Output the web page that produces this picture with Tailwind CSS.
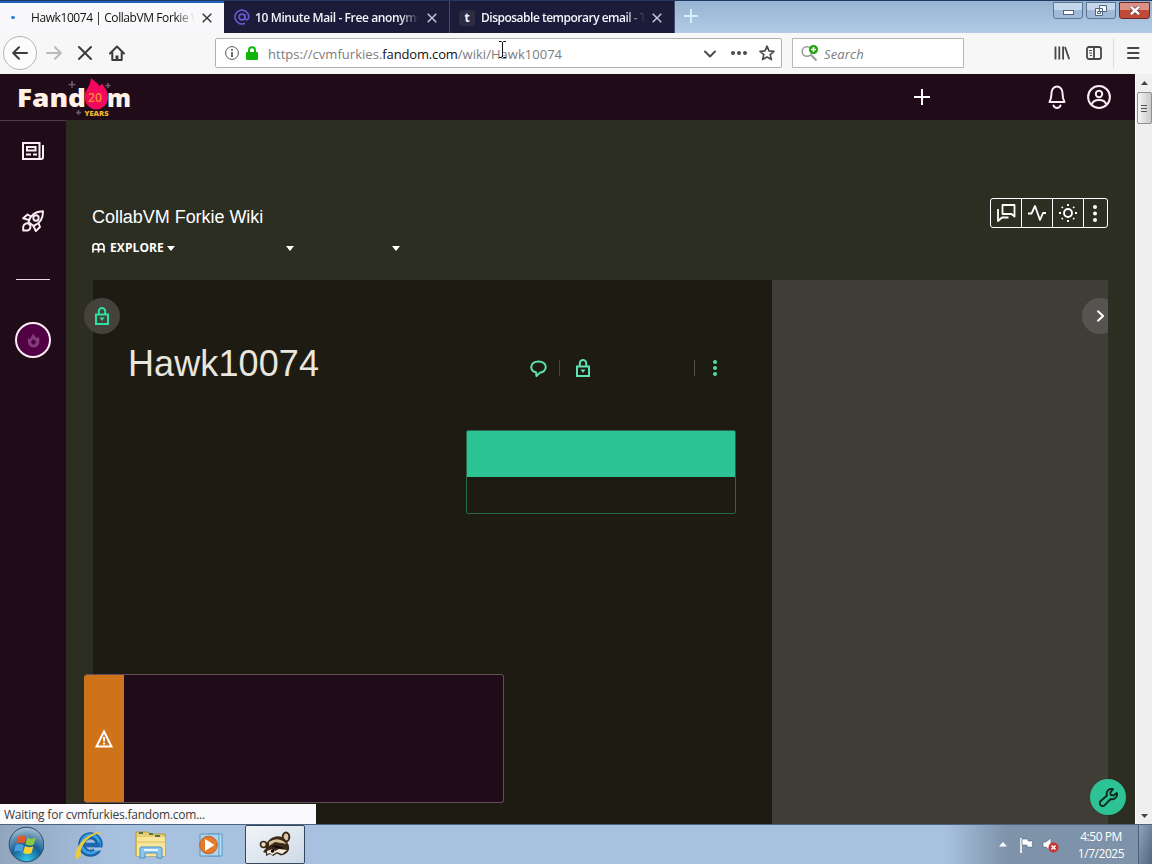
<!DOCTYPE html>
<html lang="en">
<head>
<meta charset="UTF-8">
<meta name="viewport" content="width=device-width, initial-scale=1.0">
<title>Hawk10074 | CollabVM Forkie Wiki</title>
<script src="https://cdn.jsdelivr.net/npm/@tailwindcss/browser@4"></script>
</head>
<body class="w-[1152px] h-[864px] overflow-hidden relative flex flex-col bg-[#2d2e22] font-['Open_Sans','Noto_Sans',sans-serif]">

<!-- tab strip -->
<div class="h-[33px] shrink-0 flex text-[12px] bg-linear-to-b from-[#96b3d1] to-[#b2cce6] border-t border-[#203a61]">
<div class="w-[224px] h-8 bg-[#f9f9fb] border-t-2 border-[#1d62b5] flex items-center pb-px">
<span class="ml-[11px] w-1 h-[3px] rounded-full bg-[#2d86d8]"></span>
<div class="ml-4 w-[164px] overflow-hidden whitespace-nowrap text-[#111] tracking-[-0.42px] mask-r-from-88% mask-r-to-100%">Hawk10074 | CollabVM Forkie Wiki</div>
<svg class="ml-[7px] w-[10px] h-[10px]" viewBox="0 0 10 10" stroke="#333" stroke-width="1.4"><path d="M.7.7l8.6 8.6M9.3.7L.7 9.3"/></svg>
</div>
<div class="w-[226px] h-8 bg-[#1d1b3a] border-r border-[#4a4a6c] flex items-center text-[#f4f4fa] font-semibold">
<svg class="ml-[10px] w-4 h-4" viewBox="0 0 16 16" fill="none" stroke="#6b58d0" stroke-width="1.6"><circle cx="8" cy="8" r="2.9"/><path d="M10.900 5v4.200c0 2.200 3.900 2 3.900-1.400A6.900 6.900 0 1 0 11 14.200"/></svg>
<div class="ml-[5px] mt-[2px] w-[164px] overflow-hidden whitespace-nowrap tracking-[-0.38px] mask-r-from-88% mask-r-to-100%">10 Minute Mail - Free anonymous email</div>
<svg class="ml-[8px] mt-[2px] w-[10px] h-[10px]" viewBox="0 0 10 10" stroke="#c8c8dc" stroke-width="1.4"><path d="M.7.7l8.6 8.6M9.3.7L.7 9.3"/></svg>
</div>
<div class="w-[225px] h-8 bg-[#1d1b3a] border-r border-[#4a4a6c] flex items-center text-[#f4f4fa] font-semibold">
<span class="ml-[9px] mt-[2px] w-4 h-4 rounded-sm bg-[#2d2c42] flex items-center justify-center text-[12px] font-bold leading-none pb-px">t</span>
<div class="ml-[6px] mt-[2px] w-[164px] overflow-hidden whitespace-nowrap tracking-[-0.5px] mask-r-from-88% mask-r-to-100%">Disposable temporary email - Tempail</div>
<svg class="ml-[7px] mt-[2px] w-[10px] h-[10px]" viewBox="0 0 10 10" stroke="#c8c8dc" stroke-width="1.4"><path d="M.7.7l8.6 8.6M9.3.7L.7 9.3"/></svg>
</div>
<svg class="ml-[9px] mt-2 w-[14px] h-[14px]" viewBox="0 0 14 14" stroke="#d4f1fa" stroke-width="1.8"><path d="M7 0v14M0 7h14"/></svg>
<div class="ml-auto mr-[2px] mt-px flex gap-[3px]">
<div class="w-[30px] h-[17px] rounded-b-[3px] border border-[#5d7391] bg-linear-to-b from-[#c5d8ec] from-50% to-[#9fbbd9] to-50% flex items-center justify-center"><span class="w-[11px] h-[5px] mt-1 border border-[#51657f] bg-white"></span></div>
<div class="w-[30px] h-[17px] rounded-b-[3px] border border-[#5d7391] bg-linear-to-b from-[#c5d8ec] from-50% to-[#9fbbd9] to-50% flex items-center justify-center"><svg class="w-3 h-[11px]" viewBox="0 0 12 11" fill="#f4f8fc" stroke="#51657f"><path d="M4.500.5h7v6h-7zM.5 3.500h7v7h-7z"/><path d="M2.500 6.500h3v2h-3z"/></svg></div>
<div class="w-[31px] h-[17px] rounded-b-[3px] border border-[#6d2a28] bg-linear-to-b from-[#dd9184] from-50% to-[#c04a38] to-50% flex items-center justify-center"><svg class="w-[12px] h-[9px]" viewBox="0 0 12 9"><path d="M2 .8l8 7.400M10 .8L2 8.200" stroke="#6b4747" stroke-width="3.800"/><path d="M2 .8l8 7.400M10 .8L2 8.200" stroke="#fff" stroke-width="2.400"/></svg></div>
</div>
</div>

<!-- toolbar -->
<div class="h-[41px] shrink-0 flex items-center bg-[#f7f7f8] pb-px">
<div class="ml-[3px] w-[34px] h-[34px] rounded-full border border-[#b5b5b7] bg-[#fcfcfd] flex items-center justify-center">
<svg class="w-4 h-4" viewBox="0 0 16 16" fill="none" stroke="#3c3c3e" stroke-width="2" stroke-linecap="round" stroke-linejoin="round"><path d="M15 8H1.500M7 2.200L1.200 8 7 13.800"/></svg>
</div>
<svg class="ml-[9px] w-4 h-4" viewBox="0 0 16 16" fill="none" stroke="#bababc" stroke-width="2" stroke-linecap="round" stroke-linejoin="round"><path d="M1 8h13.500M9 2.200L14.800 8 9 13.800"/></svg>
<svg class="ml-[15px] w-4 h-4" viewBox="0 0 16 16" fill="none" stroke="#3c3c3e" stroke-width="2" stroke-linecap="round"><path d="M2 2l12 12M14 2L2 14"/></svg>
<svg class="ml-4 w-4 h-4" viewBox="0 0 16 16" fill="none" stroke="#3c3c3e" stroke-width="2" stroke-linecap="round" stroke-linejoin="round"><path d="M1 8.500L8 1.500l7 7M3.300 7.500V15h9.400V7.500"/><path d="M8 15v-4.500" stroke-width="3" stroke-linecap="butt"/></svg>

<div class="ml-[90px] w-[567px] h-[30px] rounded-[2px] border border-[#b0b0b3] bg-white flex items-center">
<svg class="ml-[9px] w-[14px] h-[14px]" viewBox="0 0 14 14" fill="none" stroke="#555"><circle cx="7" cy="7" r="6.400"/><path d="M7 6v5M7 3v1.700" stroke-width="1.700"/></svg>
<svg class="ml-[7px] w-[12px] h-[14px]" viewBox="0 0 12 14"><path d="M3 7V4.200a3 3 0 0 1 6 0V7" fill="none" stroke="#12b50a" stroke-width="2"/><rect y="6" width="12" height="8" rx="1" fill="#12b50a"/></svg>
<div class="ml-[10px] mt-[3px] w-[420px] text-[13px] text-[#7c7c7e] whitespace-nowrap tracking-[0.03px]">https://cvmfurkies.<span class="text-[#111] tracking-[-0.15px]">fandom.com</span>/wiki/Hawk10074</div>
<svg class="ml-[16px] mt-px w-3 h-3 shrink-0" viewBox="0 0 12 12" fill="none" stroke="#4c4c4e" stroke-width="2" stroke-linecap="round" stroke-linejoin="round"><path d="M1 3.500l5 5 5-5"/></svg>
<svg class="ml-[15px] w-4 h-4 shrink-0" viewBox="0 0 16 16" fill="#4c4c4e"><circle cx="2" cy="8" r="2"/><circle cx="8" cy="8" r="2"/><circle cx="14" cy="8" r="2"/></svg>
<svg class="ml-[12px] w-4 h-4 shrink-0" viewBox="0 0 16 16" fill="none" stroke="#4c4c4e" stroke-width="1.700" stroke-linejoin="round"><path d="M8 1.200l2 4.700 5 .4-3.800 3.300 1.200 5L8 12l-4.400 2.600 1.200-5L1 6.300l5-.4z"/></svg>
</div>

<div class="ml-[10px] w-[172px] h-[30px] border border-[#b8b8bb] bg-white flex items-center">
<svg class="ml-[8px] w-[18px] h-4 mb-px" viewBox="0 0 18 16"><circle cx="6" cy="6.500" r="4.800" fill="none" stroke="#999" stroke-width="1.500"/><path d="M10 10l5.500 5.500" stroke="#999" stroke-width="2"/><circle cx="12.500" cy="4.500" r="4.500" fill="#22a30e"/><path d="M12.500 2v5M10 4.500h5" stroke="#fff" stroke-width="1.500"/></svg>
<span class="ml-[5px] mt-[3px] text-[13px] italic text-[#7b7b7d] tracking-[0.15px]">Search</span>
</div>
<svg class="ml-[90px] w-4 h-4" viewBox="0 0 16 16" fill="none" stroke="#47474a" stroke-width="1.800"><path d="M1.500 1.500v13M5.300 1.500v13M9.100 1.500v13M11 2l4.200 12.300"/></svg>
<svg class="ml-4 w-4 h-4" viewBox="0 0 16 16" fill="none" stroke="#47474a" stroke-width="1.800"><rect x="1" y="2" width="14" height="12" rx="2"/><path d="M8 2v12"/><path d="M3 5.500h3M3 8h3M4 10.500h2" stroke-width="1"/></svg>
<span class="ml-[11px] w-px h-[30px] bg-[#dcdcde]"></span>
<svg class="ml-[12px] w-[14px] h-4" viewBox="0 0 14 16" stroke="#47474a" stroke-width="2" stroke-linecap="round"><path d="M2 3h10.500M2 8h10.500M2 13h10.500"/></svg>
</div>

<!-- page -->
<div class="h-[750px] shrink-0 flex">
<div class="w-[1135px] flex flex-col">
<header class="h-[46px] shrink-0 bg-[#1f0c18] flex items-center">
<svg class="ml-[16px] w-[118px] h-[46px]" viewBox="16 74 118 46">
<text x="17" y="107" font-family="Open Sans" font-weight="800" font-size="25" fill="#fff1e6" textLength="69" lengthAdjust="spacingAndGlyphs">Fand</text>
<text x="107" y="107" font-family="Open Sans" font-weight="800" font-size="25" fill="#fff1e6" textLength="24" lengthAdjust="spacingAndGlyphs">m</text>
<path d="M91 78l7 6 1.500 2 3-2.500c.5 3.500 5.500 6 5.500 13.500a11.700 12.500 0 0 1-23.400 0C84.600 90 90 88 91 78z" fill="#f2085c"/>
<text x="88" y="102" font-family="Open Sans" font-weight="600" font-size="12" fill="#fb8a2b" textLength="14" lengthAdjust="spacingAndGlyphs">20</text>
<text x="84.500" y="116" font-family="Open Sans" font-weight="800" font-size="6.500" fill="#f5b62a" textLength="24" lengthAdjust="spacingAndGlyphs">YEARS</text>
<path d="M72 81v7M68.500 84.500h7M108 83v5M105.500 85.500h5M78.500 110v5M76 112.500h5" stroke="#6d5d6b" stroke-width="1.500"/>
</svg>
<svg class="ml-[780px] w-4 h-4" viewBox="0 0 16 16" stroke="#fff" stroke-width="2"><path d="M8 0v16M0 8h16"/></svg>
<svg class="ml-[118px] w-[18px] h-6" viewBox="0 0 18 24" fill="none" stroke="#fbeef5" stroke-width="2" stroke-linejoin="round" stroke-linecap="round"><path d="M1.500 17c1.500-2.500 2-4 2-9a5.500 6.500 0 0 1 11 0c0 5 .5 6.500 2 9z"/><path d="M5.500 20.500c1 3.200 6 3.200 7 0"/></svg>
<svg class="ml-[21px] w-6 h-6" viewBox="0 0 24 24" fill="none" stroke="#fbeef5" stroke-width="2"><circle cx="12" cy="12" r="10.900"/><circle cx="12" cy="9" r="3.200"/><path d="M4.800 19.500c1.500-6 12.900-6 14.400 0"/></svg>
</header>
<div class="grow flex">
<aside class="w-[66px] shrink-0 bg-[#1f0c18] border-t border-[#4d3c48] flex flex-col items-center">
<svg class="mt-[20px] w-[22px] h-[20px]" viewBox="0 0 22 20" fill="none" stroke="#fbeef5" stroke-width="2"><path d="M17.500 18V2H1v16h18a2 2 0 0 0 2-2V4"/><path d="M5 6h8.500v3.500H5z"/><path d="M4 13.500h5M11 13.500h4"/></svg>
<svg class="mt-[49px] w-[22px] h-[23px]" viewBox="0 0 22 23" fill="none" stroke="#fbeef5" stroke-width="1.900" stroke-linejoin="round"><path d="M6.500 12C8.500 5 13 1.200 21 1.300c.2 7.500-3 12-9.500 14.700z"/><circle cx="14" cy="8" r="2.700"/><path d="M9 6.500L5.500 4.500 1.200 8.300l6 1.700M16.500 13l1.500 4-4.200 4.200L11.500 16M7.500 14.500c2 2 .5 5-1.500 6H1.200v-4c.8-2.700 4-4.500 6.300-2z"/></svg>
<span class="mt-[46px] w-[34px] h-px bg-[#e8dae3]"></span>
<div class="mt-[42px] w-9 h-9 rounded-full border-2 border-[#fbeef5] bg-[#520044] flex items-center justify-center">
<svg class="w-[13px] h-[15px]" viewBox="0 0 14 16"><path d="M6.500.5L9 4l1 1.500L12.500 4c.8 2 .8 3.500.8 5.500A6 6 0 0 1 7 15.500 6 6 0 0 1 1 10V5l2 2z" fill="#843b7c"/><path d="M7 6.500l3 3-3 3.500-3-3.500z" fill="#520044"/></svg>
</div>
</aside>
<main class="relative grow pl-[27px] pr-[27px] flex flex-col bg-[#2d2e22] font-['Liberation_Sans',Arial,sans-serif]">
<div class="h-[160px] shrink-0 flex justify-between -ml-px text-white">
<div class="pt-[85px]">
<h2 class="text-[18px] leading-6 tracking-[-0.04px]">CollabVM Forkie Wiki</h2>
<nav class="mt-[7px] h-6 flex items-center font-['Open_Sans','Noto_Sans',sans-serif] text-[12px] font-bold">
<svg class="w-[13px] h-[10px]" viewBox="0 0 13 10" fill="none" stroke="#fff" stroke-width="1.700"><path d="M1 9.500V3.500a2.700 2.700 0 0 1 5.500 0V9.500M6.500 3.500a2.700 2.700 0 0 1 5.500 0V9.500M1 6.500h11"/></svg>
<span class="ml-[5px] w-[54px] tracking-[0.1px]">EXPLORE</span>
<svg class="ml-[3px] w-2 h-[5px]" viewBox="0 0 8 5" fill="#fff"><path d="M0 0h8L4 5z"/></svg>
<svg class="ml-[111px] w-2 h-[5px]" viewBox="0 0 8 5" fill="#fff"><path d="M0 0h8L4 5z"/></svg>
<svg class="ml-[98px] w-2 h-[5px]" viewBox="0 0 8 5" fill="#fff"><path d="M0 0h8L4 5z"/></svg>
</nav>
</div>
<div class="mt-[78px] w-[118px] h-[30px] rounded-[3px] border border-white flex divide-x divide-white">
<div class="w-[31px] flex items-center justify-center"><svg class="w-[19px] h-[18px]" viewBox="0 0 19 18" fill="none" stroke="#fff" stroke-width="1.800" stroke-linejoin="round"><path d="M5.500 1h12v11.500L14.500 10h-9z"/><path d="M1 5v12l4-3.500h6.500"/></svg></div>
<div class="w-[31px] flex items-center justify-center"><svg class="w-[18px] h-[18px]" viewBox="0 0 18 18" fill="none" stroke="#fff" stroke-width="1.800" stroke-linejoin="round"><path d="M0 9.500h3.500L7 2l5 14 3-7h3"/></svg></div>
<div class="w-[31px] flex items-center justify-center"><svg class="w-[18px] h-[18px]" viewBox="0 0 18 18" fill="none" stroke="#fff" stroke-width="1.900"><circle cx="9" cy="9" r="4"/><path d="M9 0v2M9 16v2M0 9h2M16 9h2M2.800 2.800l1 1M14.200 14.200l1 1M15.200 2.800l-1 1M3.800 14.200l-1 1"/></svg></div>
<div class="w-[22px] flex items-center justify-center"><svg class="w-1 h-[17px]" viewBox="0 0 4 17" fill="#fff"><circle cx="2" cy="2" r="2"/><circle cx="2" cy="8.500" r="2"/><circle cx="2" cy="15" r="2"/></svg></div>
</div>
</div>
<div class="grow flex">
<article class="w-[679px] px-9 bg-[#1e1b12]">
<div class="mt-[63px] h-[42px] flex items-center text-[#2fdf9f]">
<h1 class="w-[402px] -ml-px text-[36px] leading-[42px] text-[#e8e6df] tracking-[0.1px]">Hawk10074</h1>
<svg class="mt-2 w-[17px] h-[17px]" viewBox="0 0 17 17" fill="none" stroke="#5fe3b0" stroke-width="2" stroke-linejoin="round"><path d="M6 12.300C2.800 11.600 1.200 9.300 1.200 7c0-3 3-5.600 7.300-5.600s7.300 2.600 7.300 5.600-3 5.600-5.800 5.600L6.500 16z"/></svg>
<span class="mt-2 ml-[12px] w-px h-4 bg-[#45443b]"></span>
<svg class="mt-2 ml-[15px] w-[16px] h-[18px]" viewBox="0 0 16 18" fill="none" stroke="#5fe3b0" stroke-width="2"><path d="M2 7.500h12V17H2zM4.800 7.500V4.200a3.200 3.200 0 0 1 6.400 0v3.300"/><path d="M5.500 10.500h5L8 14z" fill="#5fe3b0" stroke="none"/></svg>
<span class="mt-2 ml-[103px] w-px h-4 bg-[#55544b]"></span>
<svg class="mt-2 ml-[18px] w-1 h-4" viewBox="0 0 4 16" fill="#4fe0a8"><circle cx="2" cy="2" r="2"/><circle cx="2" cy="8" r="2"/><circle cx="2" cy="14" r="2"/></svg>
</div>
<div class="mt-[45px] ml-auto w-[270px] h-[84px] rounded-[2px] border border-[#24664b] overflow-hidden"><div class="h-[46px] bg-[#2ec394]"></div></div>
</article>
<div class="relative grow bg-[#403c36] overflow-hidden">
<!-- rail toggle -->
<div class="absolute right-[-10px] top-[18px] w-9 h-9 rounded-full bg-[#575350] flex items-center justify-center"><svg class="w-[8px] h-[12px]" viewBox="0 0 8 12" fill="none" stroke="#fff" stroke-width="2"><path d="M1.500 .8L7 6 1.500 11.200"/></svg></div>
</div>
</div>
<div class="absolute left-[18px] top-[178px] w-9 h-9 rounded-full bg-[#45423b] flex items-center justify-center"><svg class="w-[16px] h-[18px]" viewBox="0 0 16 18" fill="none" stroke="#2fdf9f" stroke-width="2"><path d="M2 7.500h12V17H2zM4.800 7.500V4.200a3.200 3.200 0 0 1 6.400 0v3.300"/><path d="M5.500 10.500h5L8 14z" fill="#2fdf9f" stroke="none"/></svg></div>
<!-- warning banner -->
<div class="absolute left-[18px] top-[554px] w-[420px] h-[129px] rounded-[3px] overflow-hidden border border-l-0 border-[#5f5058] bg-[#1f0c18] flex">
<div class="w-10 -my-px bg-[#cf731b] flex items-center justify-center"><svg class="w-5 h-5" viewBox="0 0 20 20" fill="none" stroke="#fff" stroke-width="2"><path d="M10 2.500L17.500 17.500h-15z"/><path d="M10 8v4.300M10 13.500v2"/></svg></div>
</div>
<div class="absolute right-[9px] bottom-[9px] w-9 h-9 rounded-full bg-[#2ec394] flex items-center justify-center"><svg class="w-[19px] h-[19px]" viewBox="0 0 19 19" fill="none" stroke="#0d2a1e" stroke-width="1.900" stroke-linejoin="round"><path d="M14 1.200a4.800 4.800 0 0 0-6 6.300L1.700 13a2.700 2.700 0 1 0 4 4.200l6-6.200a4.800 4.800 0 0 0 6.100-6L14.500 7.500 11.800 7l-.5-2.500z"/></svg></div>
</main>
</div>
</div>
<!-- scrollbar -->
<div class="w-[17px] bg-[#efefef] border-l border-[#fafafa] flex flex-col items-center">
<svg class="mt-[7px] w-[7px] h-1" viewBox="0 0 7 4" fill="#444"><path d="M0 4L3.500 0 7 4z"/></svg>
<div class="mt-[7px] w-[15px] h-[32px] rounded-[2px] border border-[#8f8f8f] bg-linear-to-r from-[#f5f5f5] to-[#c9c9cb] flex flex-col items-center justify-center gap-[2px]"><span class="w-[6px] h-px bg-[#555]"></span><span class="w-[6px] h-px bg-[#555]"></span><span class="w-[6px] h-px bg-[#555]"></span></div>
<svg class="mt-auto mb-[6px] w-[7px] h-1" viewBox="0 0 7 4" fill="#444"><path d="M0 0h7L3.500 4z"/></svg>
</div>
</div>

<!-- taskbar -->
<div class="h-[40px] shrink-0 flex items-center border-t border-[#4d6480] bg-linear-to-r from-[#91a6be] via-[#a7c1df] via-10% to-[#a7c1df]">
<svg class="ml-[8px] w-9 h-[37px]" viewBox="0 0 36 37">
<defs><radialGradient id="orb" cx=".5" cy=".95" r=".9"><stop offset="0" stop-color="#35c6ea"/><stop offset=".5" stop-color="#155f96"/><stop offset="1" stop-color="#9db9cc"/></radialGradient></defs>
<circle cx="18.500" cy="18.500" r="17.300" fill="url(#orb)" stroke="#2d4c6a"/>
<path d="M10 10.500c3-1.500 5.500-1.300 8 .3l-1.800 7c-2.500-1.500-5-1.700-8-.3z" fill="#e3572a"/><path d="M19.300 11.500c3 1.600 5.500 1.400 8.500 0l-2 7c-3 1.300-5.500 1.300-8.300-.3z" fill="#8cc83e"/><path d="M7.800 19c3-1.400 5.500-1.200 8 .3l-1.800 6.800c-2.500-1.500-5-1.700-8-.3z" fill="#4b9ee0"/><path d="M17 20c3 1.600 5.500 1.500 8.400.2l-1.900 6.800c-3 1.400-5.500 1.300-8.400-.2z" fill="#fbd12e"/>
</svg>
<svg class="ml-[29px] w-8 h-8" viewBox="0 0 32 32">
<circle cx="17.500" cy="15.500" r="8.700" fill="none" stroke="#185ea8" stroke-width="7"/><circle cx="17.500" cy="15" r="9" fill="none" stroke="#3a9fe0" stroke-width="3"/><path d="M10 16h17" stroke="#1b69b3" stroke-width="4.500"/><path d="M21 20h9" stroke="#a7c1df" stroke-width="3"/>
<path d="M3.500 30C0 26 6 12 16 6.500c7-4 12-4.500 13-1-3-2-8 0-12 3C10 13.500 6 22 8 27z" fill="#efcb3a"/>
</svg>
<svg class="ml-[30px] w-8 h-8" viewBox="0 0 32 32">
<path d="M1 3h12l2 2h15v22H1z" fill="#e8cf74" stroke="#b9983f"/><path d="M2 8h28v19H2z" fill="#f7e59a"/><path d="M4 4h4M14 5h4M20 7h5" stroke="#4f7545" stroke-width="2"/><path d="M2 13h28" stroke="#dcbf62"/><path d="M5 29v-9q0-2 2-2h18q2 0 2 2v9h-5v-5H10v5z" fill="#8cc8ee" stroke="#4b91c8"/><path d="M9 21h14" stroke="#e5f5fd" stroke-width="2"/>
</svg>
<svg class="ml-[29px] w-8 h-8" viewBox="0 0 32 32">
<path d="M12 5h14v22H12z" fill="#b8e0f5" stroke="#4a9bcd"/><path d="M4 5h19v22H4z" fill="#aed5ef" stroke="#5b96c4"/><circle cx="12.500" cy="16" r="8.800" fill="#e7792b" stroke="#bf632a"/><path d="M9 10l9.500 6L9 22z" fill="#fff"/>
</svg>
<div class="ml-[17px] w-[60px] h-[39px] border border-[#35485e] rounded-[2px] bg-linear-to-br from-[#f1f5f9] to-[#ced9e5] flex items-center justify-center">
<svg class="w-8 h-7" viewBox="0 0 32 28">
<circle cx="4.500" cy="13.500" r="3" fill="#e8d9bd" stroke="#3b2919" stroke-width="1.700"/>
<ellipse cx="27" cy="6" rx="3.300" ry="4.500" fill="#d9c6a5" stroke="#3b2919" stroke-width="2"/>
<path d="M7 13q4-7 10-7.500 6-1 10 4 4 5 3 9-2 5-8 6l-4-2-4 2.500-3-2-4 2 0-3-3-1 3-4z" fill="#3b2919"/>
<path d="M10 11q7-5 14-1l4 3-6-1-6-1-6 4z" fill="#d9c39b"/>
<path d="M8 20l5-2 3 2 4-2 8 1-5 4-5-2-5 3-2-2-3 1z" fill="#f3eadb"/>
<path d="M12 15q7-2 13 3l-7-1z" fill="#0e0906"/><circle cx="13.500" cy="20" r="1.800" fill="#0e0906"/>
</svg>
</div>
<!-- tray -->
<div class="ml-auto w-[206px] h-full flex items-center bg-linear-to-r from-[#a7c1df] to-[#7e92a9] to-30% text-white">
<svg class="ml-[53px] w-[8px] h-[5px]" viewBox="0 0 8 5" fill="#fff"><path d="M0 4.500L4 0l4 4.500z"/></svg>
<svg class="ml-[12px] w-4 h-4" viewBox="0 0 16 16"><path d="M2 1v15" stroke="#fff" stroke-width="1.600"/><path d="M3 2h6v2h5l-1 3 1 3H8V8H3z" fill="#fff" stroke="#51657c" stroke-width=".6"/></svg>
<svg class="ml-[7px] w-[17px] h-4" viewBox="0 0 17 16"><path d="M1 5h3l5-4v13l-5-4H1z" fill="#fff" stroke="#5b6d82" stroke-width=".7"/><circle cx="11.500" cy="10.500" r="5" fill="#cf2f2c"/><path d="M9.500 8.500l4 4M13.500 8.500l-4 4" stroke="#fff" stroke-width="1.600"/></svg>
<div class="ml-[14px] w-[56px] text-center text-[12px] leading-[17px] tracking-[-0.45px] whitespace-nowrap">4:50 PM<br>1/7/2025</div>
<div class="ml-auto w-[14px] h-full border-l border-[#4a5e75] bg-linear-to-br from-[#8fa3b9] to-[#52667e]"></div>
</div>
</div>

<!-- status bubble -->
<div class="absolute left-0 top-[804px] w-[316px] h-5 bg-[#fafafc] pl-1 text-[12px] leading-[22px] text-[#3c3c3e] tracking-[-0.22px] whitespace-nowrap">Waiting for cvmfurkies.fandom.com...</div>
<!-- text cursor -->
<svg class="absolute left-[499px] top-[41px] w-[7px] h-[17px]" viewBox="0 0 7 17" fill="none" stroke="#111"><path d="M0 .5h2.500l1 1 1-1H7M3.500 1v15M0 16.500h2.500l1-1 1 1H7"/></svg>
</body>
</html>
